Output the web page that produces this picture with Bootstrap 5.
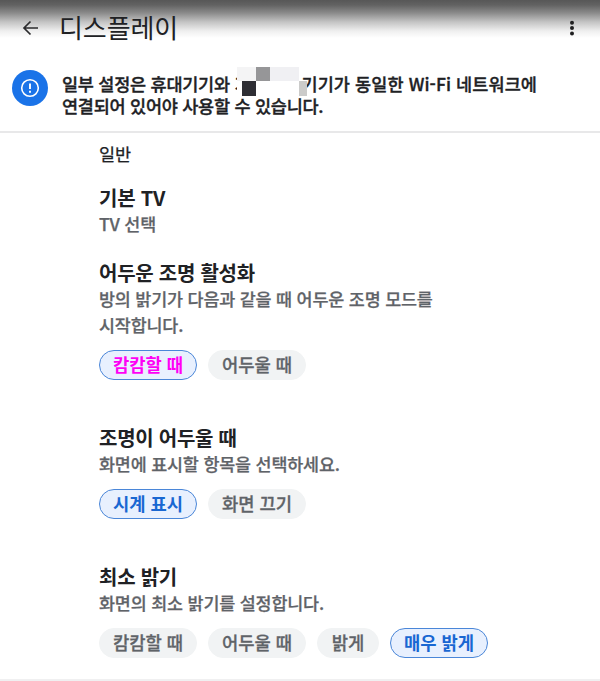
<!DOCTYPE html>
<html lang="ko">
<head>
<meta charset="utf-8">
<meta name="viewport" content="width=device-width, initial-scale=1">
<title>디스플레이</title>
<link href="https://cdn.jsdelivr.net/npm/bootstrap@5.3.0/dist/css/bootstrap.min.css" rel="stylesheet">
<style>
body{font-family:"Noto Sans CJK KR",sans-serif;color:#202124;height:681px;overflow:hidden}
.topbar{height:56px;padding-left:20px;padding-right:18px;background:linear-gradient(#575757 0,#626262 5px,#8b8b8b 13px,#c4c4c4 22px,#efefef 31px,#fff 38px)}
.topbar h1{font-size:26px;line-height:40px;letter-spacing:-.1px;margin-left:19px;padding-bottom:2px}
.notice{height:77px;padding:14px 0 0 12px;border-bottom:2px solid #e8e8e9}
.notice-icon{width:36px;height:36px;background:#1a73e8}
.notice-text{font-size:17.5px;line-height:22px;font-weight:500;letter-spacing:-.25px;margin:3px 0 0 14px;-webkit-text-stroke:.35px currentColor}
.notice-tail{letter-spacing:.1px}
.hidden-name{display:inline-block;width:67px;height:22px;vertical-align:top}
.hidden-name svg{left:3px;top:-6px}
.settings{height:548px;padding-left:99px;border-bottom:2px solid #f0f0f1}
.section-name{font-size:17.5px;line-height:26px;padding-top:8px;-webkit-text-stroke:.25px currentColor}
.setting{margin-top:45px}
.setting.default-tv{margin-top:18px}
.setting.low-light{margin-top:23px}
.setting h2{font-size:20px;line-height:26px;font-weight:700;letter-spacing:-.25px}
.setting p{font-size:17.4px;line-height:26px;font-weight:500;color:#5f6368;letter-spacing:-.17px;-webkit-text-stroke:.25px currentColor}
.chips{gap:11px}
.chip{height:30px;min-width:98px;padding:0 12px;border:1px solid #f1f3f4;background:#f1f3f4;color:#5f6368;font-size:17.7px;line-height:27px;font-weight:500;white-space:nowrap;-webkit-text-stroke:.3px currentColor}
.chip.narrow{min-width:62px}
.chip.selected{background:#e8f0fe;border-color:#4a86d8;color:#1967d2;font-weight:700;-webkit-text-stroke:0}
.chip.accent{color:#ff00f5}
</style>
<script src="https://cdn.jsdelivr.net/npm/bootstrap@5.3.0/dist/js/bootstrap.bundle.min.js"></script>
</head>
<body class="bg-white">
<header class="topbar d-flex align-items-center">
  <svg width="20" height="20" viewBox="0 0 20 20" fill="none" stroke="#2b2b2d" stroke-width="1.7"><path d="M18 10H4M10.5 3.5 4 10l6.500 6.500"/></svg>
  <h1 class="fw-normal mb-0">디스플레이</h1>
  <svg class="ms-auto" width="20" height="20" viewBox="0 0 20 20" fill="#1f1f20"><circle cx="10" cy="4.700" r="2"/><circle cx="10" cy="10" r="2"/><circle cx="10" cy="15.400" r="2"/></svg>
</header>
<section class="notice d-flex align-items-start">
  <div class="notice-icon rounded-circle d-flex align-items-center justify-content-center flex-shrink-0">
    <svg width="20" height="20" viewBox="0 0 20 20" fill="none" stroke="#fff" stroke-width="1.600"><circle cx="10" cy="10" r="8.300"/><path d="M10 5.500v5.500M10 12.700v2" stroke-width="1.900"/></svg>
  </div>
  <div class="notice-text text-nowrap">일부 설정은 휴대기기와 <span class="hidden-name position-relative">기<svg class="position-absolute" width="70" height="29" shape-rendering="crispEdges"><path fill="#fff" d="M0 0h62v29H0z"/><path fill="#f4f4f5" d="M0 0h19v14H0z"/><path fill="#969698" d="M19 0h14v14H19z"/><path fill="#f0f0f3" d="M33 0h29v14H33z"/><path fill="#2e2e34" d="M5 14h14v15H5z"/><path fill="#cbcbca" d="M62 14h8v15h-8z"/></svg></span><span class="notice-tail">기기가 동일한 Wi-Fi 네트워크에</span><br>연결되어 있어야 사용할 수 있습니다.</div>
</section>
<main class="settings">
  <div class="section-name">일반</div>
  <section class="setting default-tv">
    <h2 class="mb-0">기본 TV</h2>
    <p class="mb-0">TV 선택</p>
  </section>
  <section class="setting low-light">
    <h2 class="mb-0">어두운 조명 활성화</h2>
    <p class="mb-0">방의 밝기가 다음과 같을 때 어두운 조명 모드를<br>시작합니다.</p>
    <div class="chips d-flex mt-2 pt-1">
      <span class="chip selected accent rounded-pill text-center">캄캄할 때</span>
      <span class="chip rounded-pill text-center">어두울 때</span>
    </div>
  </section>
  <section class="setting">
    <h2 class="mb-0">조명이 어두울 때</h2>
    <p class="mb-0">화면에 표시할 항목을 선택하세요.</p>
    <div class="chips d-flex mt-2 pt-1">
      <span class="chip selected rounded-pill text-center">시계 표시</span>
      <span class="chip rounded-pill text-center">화면 끄기</span>
    </div>
  </section>
  <section class="setting">
    <h2 class="mb-0">최소 밝기</h2>
    <p class="mb-0">화면의 최소 밝기를 설정합니다.</p>
    <div class="chips d-flex mt-2 pt-1">
      <span class="chip rounded-pill text-center">캄캄할 때</span>
      <span class="chip rounded-pill text-center">어두울 때</span>
      <span class="chip narrow rounded-pill text-center">밝게</span>
      <span class="chip selected rounded-pill text-center">매우 밝게</span>
    </div>
  </section>
</main>
</body>
</html>
